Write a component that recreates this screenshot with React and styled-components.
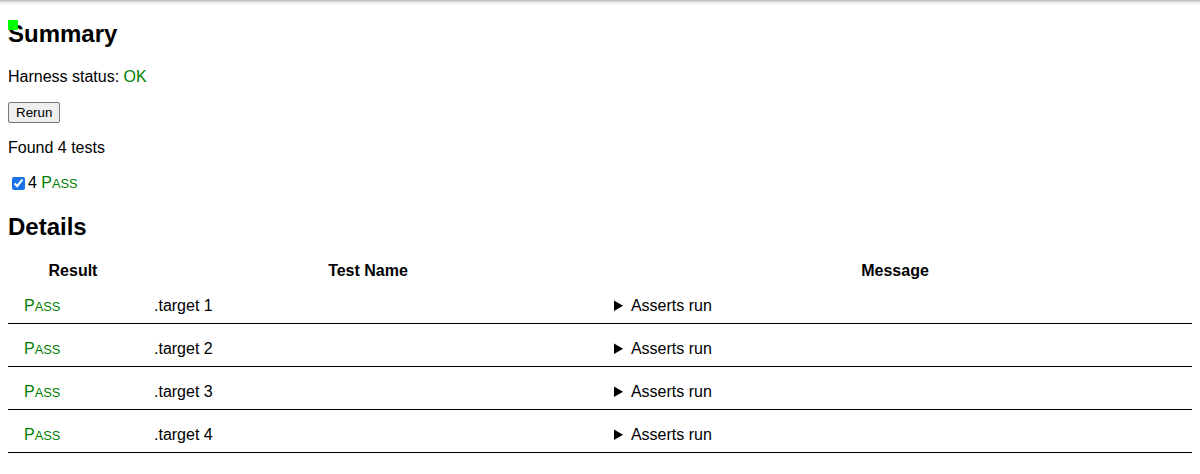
import React from 'react'
import styled, { createGlobalStyle } from 'styled-components'

const GlobalStyle = createGlobalStyle`
html {
  font-family: "Liberation Sans", Arial, sans-serif;
  background: linear-gradient(#b4b4b4, #e6e6e6 2px, #fff 5px) no-repeat;
  background-color: #fff;
}
body {
  margin: 0 8px 8px;
  font-size: 16px;
  color: black;
}
`

const Target = styled.div`
position: absolute;
top: 20px;
left: 8px;
width: 10px;
height: 10px;
background: #00ff00;
`

const Log = styled.div`
padding-top: 0.1px;
`

const Section = styled.section`
margin-bottom: ${props => props.last ? "0" : "1em"};
`

const Heading = styled.h2`
font-size: 24px;
font-weight: bold;
margin: 0.83em 0;
`

const Para = styled.p`
margin: 1em 0;
`

const Ok = styled.span`
color: green;
`

const RerunButton = styled.button`
font-family: "Liberation Sans", Arial, sans-serif;
font-size: 13.333px;
padding: 2px 7px;
border: 1px solid #767676;
border-radius: 2px;
background: #efefef;
color: black;
`

const FilterRow = styled.div`
padding-top: 0.5px;
line-height: 19px;
`

const Check = styled.input`
margin: 3px 3px 3px 4px;
width: 13px;
height: 13px;
vertical-align: -2px;
accent-color: #1a73e8;
`

const PassText = styled.span`
color: green;
`

const Caps = styled.span`
font-size: 0.8em;
text-transform: uppercase;
`

const Results = styled.table`
border-collapse: collapse;
table-layout: fixed;
width: 100%;
`

const Th = styled.th`
padding: 1px;
width: ${props => props.w || "auto"};
font-weight: bold;
text-align: center;
`

const Row = styled.tr``

const Td = styled.td`
padding: 1em 1em 0.5em;
border-bottom: thin solid black;
color: ${props => props.pass ? "green" : "black"};
`

const Summary = styled.summary`
cursor: default;
`

const SmallCaps = ({ children }) => (
  <>
    {children[0]}
    <Caps>{children.slice(1)}</Caps>
  </>
)

const tests = [".target 1", ".target 2", ".target 3", ".target 4"]

const App = () => {
  return (
    <>
      <GlobalStyle />
      <Target />
      <Log>
        <Section>
          <Heading>Summary</Heading>
          <Para>Harness status: <Ok>OK</Ok></Para>
          <Para><RerunButton>Rerun</RerunButton></Para>
          <Para>Found 4 tests</Para>
          <FilterRow>
            <label>
              <Check type="checkbox" defaultChecked />4 <PassText><SmallCaps>Pass</SmallCaps></PassText>
            </label>
          </FilterRow>
        </Section>
        <Section last>
          <Heading>Details</Heading>
          <Results>
            <thead>
              <tr>
                <Th w="8em">Result</Th>
                <Th>Test Name</Th>
                <Th w="50%">Message</Th>
              </tr>
            </thead>
            <tbody>
              {tests.map(t => (
                <Row key={t}>
                  <Td pass><SmallCaps>Pass</SmallCaps></Td>
                  <Td>{t}</Td>
                  <Td>
                    <details>
                      <Summary>Asserts run</Summary>
                    </details>
                  </Td>
                </Row>
              ))}
            </tbody>
          </Results>
        </Section>
      </Log>
    </>
  )
}

export default App
